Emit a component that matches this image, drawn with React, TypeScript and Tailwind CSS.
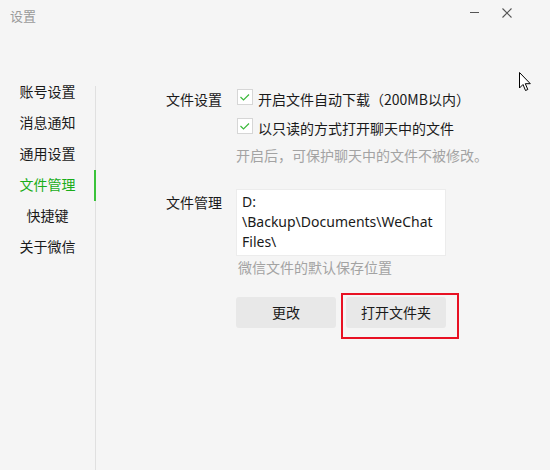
import React from "react";

const Check = () => (
  <div className="w-[16px] h-[16px] bg-white border border-[#d6d6d6] shrink-0 mt-[1px] ml-[1px] flex items-center justify-center">
    <svg width="14" height="14" viewBox="0 0 14 14">
      <path d="M2.5 7 L5.5 10 L11 4.5" fill="none" stroke="#3cb93c" strokeWidth="1.2" />
    </svg>
  </div>
);

const items = ["账号设置", "消息通知", "通用设置", "文件管理", "快捷键", "关于微信"];

export default function App() {
  return (
    <div className="w-[550px] h-[470px] bg-[#f5f5f5] flex flex-col relative overflow-hidden font-['Noto_Sans_CJK_SC',sans-serif] text-[#1a1a1a]">
      <div className="h-[34px] flex items-start justify-between shrink-0">
        <div className="pl-[10px] pt-[8px] text-[13px] leading-[16px] text-[#9a9a9a]">设置</div>
        <div className="flex items-start">
          <div className="w-[9px] h-px bg-[#555] mt-[12px] mr-[23px]" />
          <svg width="10" height="10" viewBox="0 0 10 10" className="mt-[8px] mr-[38px]">
            <path d="M0.5 0.5 L9.5 9.5 M9.5 0.5 L0.5 9.5" stroke="#555" strokeWidth="1.1" />
          </svg>
        </div>
      </div>
      <div className="flex flex-1">
        <div className="w-[95px] pt-[42px] flex flex-col shrink-0">
          {items.map((t, i) => (
            <div
              key={t}
              className={
                "relative h-[31px] flex items-center justify-center text-[14px] " +
                (i === 3 ? "text-[#1aad19]" : "text-[#1a1a1a]")
              }
            >
              {t}
              {i === 3 && <span className="absolute right-[-1px] top-[1px] w-[2px] h-[31px] bg-[#3ac33a]" />}
            </div>
          ))}
        </div>
        <div className="w-px bg-[#e0e0e0] mt-[52px] shrink-0" />
        <div className="flex flex-col pl-[70px] pt-[54px] text-[14px]">
          <div className="flex">
            <div className="w-[70px] leading-[22px] shrink-0">文件设置</div>
            <div className="flex flex-col">
              <div className="h-[29px] flex items-start">
                <Check />
                <span className="ml-[5px] leading-[22px]">开启文件自动下载（200MB以内）</span>
              </div>
              <div className="h-[27px] flex items-start">
                <Check />
                <span className="ml-[5px] leading-[22px]">以只读的方式打开聊天中的文件</span>
              </div>
              <div className="leading-[22px] text-[#a3a3a3]">开启后，可保护聊天中的文件不被修改。</div>
            </div>
          </div>
          <div className="flex mt-[23px]">
            <div className="w-[70px] leading-[22px] mt-[2px] shrink-0">文件管理</div>
            <div className="flex flex-col">
              <div className="w-[210px] h-[67px] bg-white border border-[#ececec] pl-[5px] pt-[2px] leading-[20px] font-['Noto_Sans',sans-serif]">
                D:
                <br />
                \Backup\Documents\WeChat
                <br />
                Files\
              </div>
              <div className="leading-[22px] text-[#a3a3a3] pl-[2px]">微信文件的默认保存位置</div>
              <div className="flex gap-[10px] mt-[19px]">
                <button className="w-[100px] h-[31px] bg-[#e8e8e8] rounded-[3px] text-[14px] text-[#1a1a1a]">更改</button>
                <div className="relative">
                  <button className="w-[100px] h-[31px] bg-[#e8e8e8] rounded-[3px] text-[14px] text-[#1a1a1a]">打开文件夹</button>
                  <div className="absolute left-[-5px] top-[-4px] w-[118px] h-[46px] border-2 border-[#e81123] pointer-events-none" />
                </div>
              </div>
            </div>
          </div>
        </div>
      </div>
      <svg className="absolute left-[519px] top-[72px]" width="13" height="20" viewBox="0 0 13 20">
        <path
          d="M0.5 0.5 L0.5 16 L4 12.5 L6.5 18.5 L8.8 17.5 L6.3 11.7 L11.3 11.7 Z"
          fill="#fff"
          stroke="#000"
          strokeWidth="1"
          strokeLinejoin="miter"
        />
      </svg>
    </div>
  );
}
